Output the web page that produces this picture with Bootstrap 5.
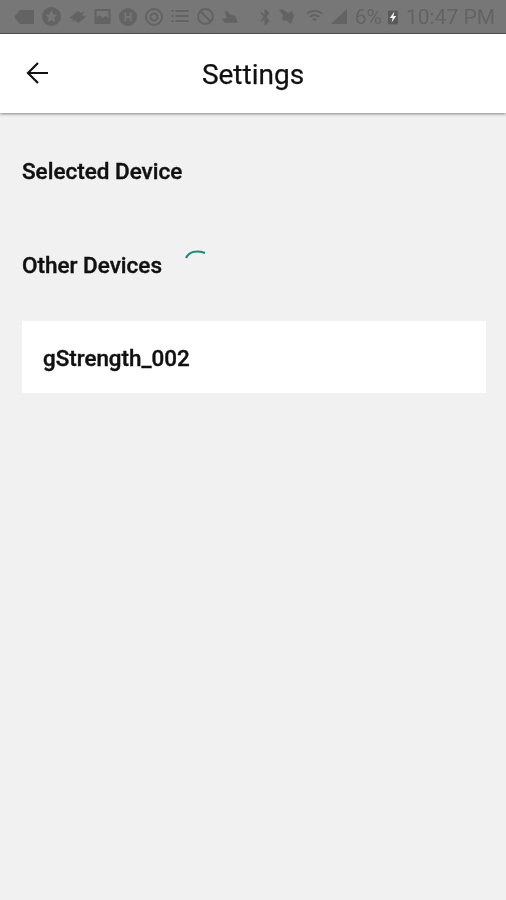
<!DOCTYPE html>
<html lang="en">
<head>
    <meta charset="UTF-8">
    <meta name="viewport" content="width=device-width, initial-scale=1.0">
    <title>Settings</title>
    <link href="https://cdn.jsdelivr.net/npm/bootstrap@5.3.2/dist/css/bootstrap.min.css" rel="stylesheet">
    <style>
        body {
            background: #f1f1f1;
            font-family: Roboto, "Liberation Sans", sans-serif;
            color: #111;
            min-height: 900px;
        }
        .status-strip {
            height: 34px;
            background: #777;
            border-bottom: 1px solid #555;
            padding: 0 11px 0 14px;
            color: #636363;
        }
        .status-strip svg {
            display: block;
            fill: #636363;
            filter: blur(.7px);
        }
        .status-strip svg.line-icon {
            fill: none;
            stroke: #636363;
            stroke-width: 2;
        }
        .status-strip svg.battery-icon { filter: blur(.3px); }
        .status-text {
            font-size: 21px;
            line-height: 34px;
            filter: blur(.6px);
            white-space: nowrap;
        }
        .gap-after-bt { margin-right: 1px; }
        .gap-after-mute { margin-right: 4px; }
        .gap-before-pct { margin-right: -2px; }
        .app-header {
            height: 79px;
            background: #fff;
            box-shadow: 0 1px 3px rgba(0, 0, 0, .45);
        }
        .back-btn {
            left: 25px;
            top: 27px;
            line-height: 0;
        }
        .app-title {
            font-size: 28px;
            font-weight: 400;
            line-height: 82px;
            margin: 0;
            -webkit-text-stroke: .25px #111;
            filter: blur(.3px);
        }
        .section-label {
            font-size: 22.500px;
            font-weight: 500;
            line-height: 28px;
            margin: 0;
            -webkit-text-stroke: .4px #111;
            filter: blur(.3px);
        }
        .page-body { padding: 44px 20px 0 22px; }
        .other-row { margin-top: 66px; }
        .spin-mark {
            margin-left: 22px;
            margin-top: -19px;
        }
        .device-item {
            margin-top: 42px;
            height: 72px;
            padding: 4px 0 0 21px;
            background: #fff;
            font-size: 22.400px;
            font-weight: 500;
        }
        .device-name {
            -webkit-text-stroke: .4px #111;
            filter: blur(.3px);
        }
    </style>
</head>
<body>

<div class="status-strip d-flex align-items-center justify-content-between">
    <div class="d-flex align-items-center gap-2">
        <svg width="20" height="16" viewBox="0 0 20 16"><path d="M0 8 6 1h14v14H6z"/></svg>
        <svg width="19" height="19" viewBox="0 0 20 20"><path fill-rule="evenodd" d="M10 0a10 10 0 1 0 0 20 10 10 0 0 0 0-20zm0 4 2 4 4 .5-3 3 .8 4.500L10 14l-3.800 2L7 11.500l-3-3L8 8z"/></svg>
        <svg width="17" height="13" viewBox="0 0 17 13"><path d="M0 8 9 1l3 2 4-2-3 4 4 2-8 6-3-3-4 2 2-3z"/></svg>
        <svg width="17" height="15" viewBox="0 0 16 15"><path fill-rule="evenodd" d="M0 0h16v15H0zm2 2v7l3-3 3 3 3-2 3 2V2z"/></svg>
        <svg width="18" height="18" viewBox="0 0 20 20"><path fill-rule="evenodd" d="M10 0a10 10 0 1 0 0 20 10 10 0 0 0 0-20zM6 5h2v4h4V5h2v10h-2v-4H8v4H6z"/></svg>
        <svg class="line-icon" width="18" height="18" viewBox="0 0 18 18"><circle cx="9" cy="9" r="8"/><circle cx="9" cy="9" r="3.500"/></svg>
        <svg width="18" height="15" viewBox="0 0 17 15"><path d="M0 1h2v2H0zm4 0h13v2H4zM0 6h2v2H0zm4 0h13v2H4zm-4 5h2v2H0zm4 0h13v2H4z"/></svg>
        <svg class="line-icon" width="17" height="17" viewBox="0 0 17 17"><circle cx="8.500" cy="8.500" r="7.500"/><path d="m3 3 11 11"/></svg>
        <svg width="16" height="12" viewBox="0 0 17 12"><path d="M3 0h3l2 3 6 2 3 7H3l-3-4 5-1z"/></svg>
    </div>
    <div class="d-flex align-items-center gap-2">
        <svg class="gap-after-bt" width="10" height="16" viewBox="0 0 9 16"><path d="M4 0h1l4 4-3 4 3 4-4 4H4v-6l-3 3-1-1 3-4-3-4 1-1 3 3z"/></svg>
        <svg class="gap-after-mute" width="15" height="15" viewBox="0 0 15 15"><path d="M0 1 3 0l6 4 4-2 2 5-3 8-4-3-5-1 1-5z"/></svg>
        <svg class="line-icon" width="17" height="15" viewBox="0 0 18 15"><path d="M1 4.500c4-4 12-4 16 0M4 8c3-2.500 7-2.500 10 0M7 11c1.500-1 2.500-1 4 0"/></svg>
        <svg width="16" height="15" viewBox="0 0 16 15"><path d="M0 15 16 0v15z"/></svg>
        <span class="status-text gap-before-pct">6%</span>
        <svg class="battery-icon" width="10" height="16" viewBox="0 0 11 16"><path d="M0 1h11v15H0z" fill="#5a5a5a"/><path d="M7 2 2 9h3l-1 5 5-7H6z" fill="#f2f2f2"/></svg>
        <span class="status-text">10:47 PM</span>
    </div>
</div>

<header class="app-header position-relative text-center">
    <span class="back-btn position-absolute">
        <svg width="24" height="24" viewBox="0 0 24 24" fill="none" stroke="#111" stroke-width="2.200"><path d="M23 12H3M13 2 3 12l10 10"/></svg>
    </span>
    <h1 class="app-title">Settings</h1>
</header>

<main class="page-body">
    <p class="section-label">Selected Device</p>
    <div class="other-row d-flex align-items-center">
        <p class="section-label">Other Devices</p>
        <svg class="spin-mark" width="24" height="14" viewBox="0 0 24 14" fill="none" stroke="#1d8a78" stroke-width="2.200"><path d="M2 9C5 3 12 1 21 4"/></svg>
    </div>
    <div class="device-item d-flex align-items-center"><span class="device-name">gStrength_002</span></div>
</main>

</body>
</html>
